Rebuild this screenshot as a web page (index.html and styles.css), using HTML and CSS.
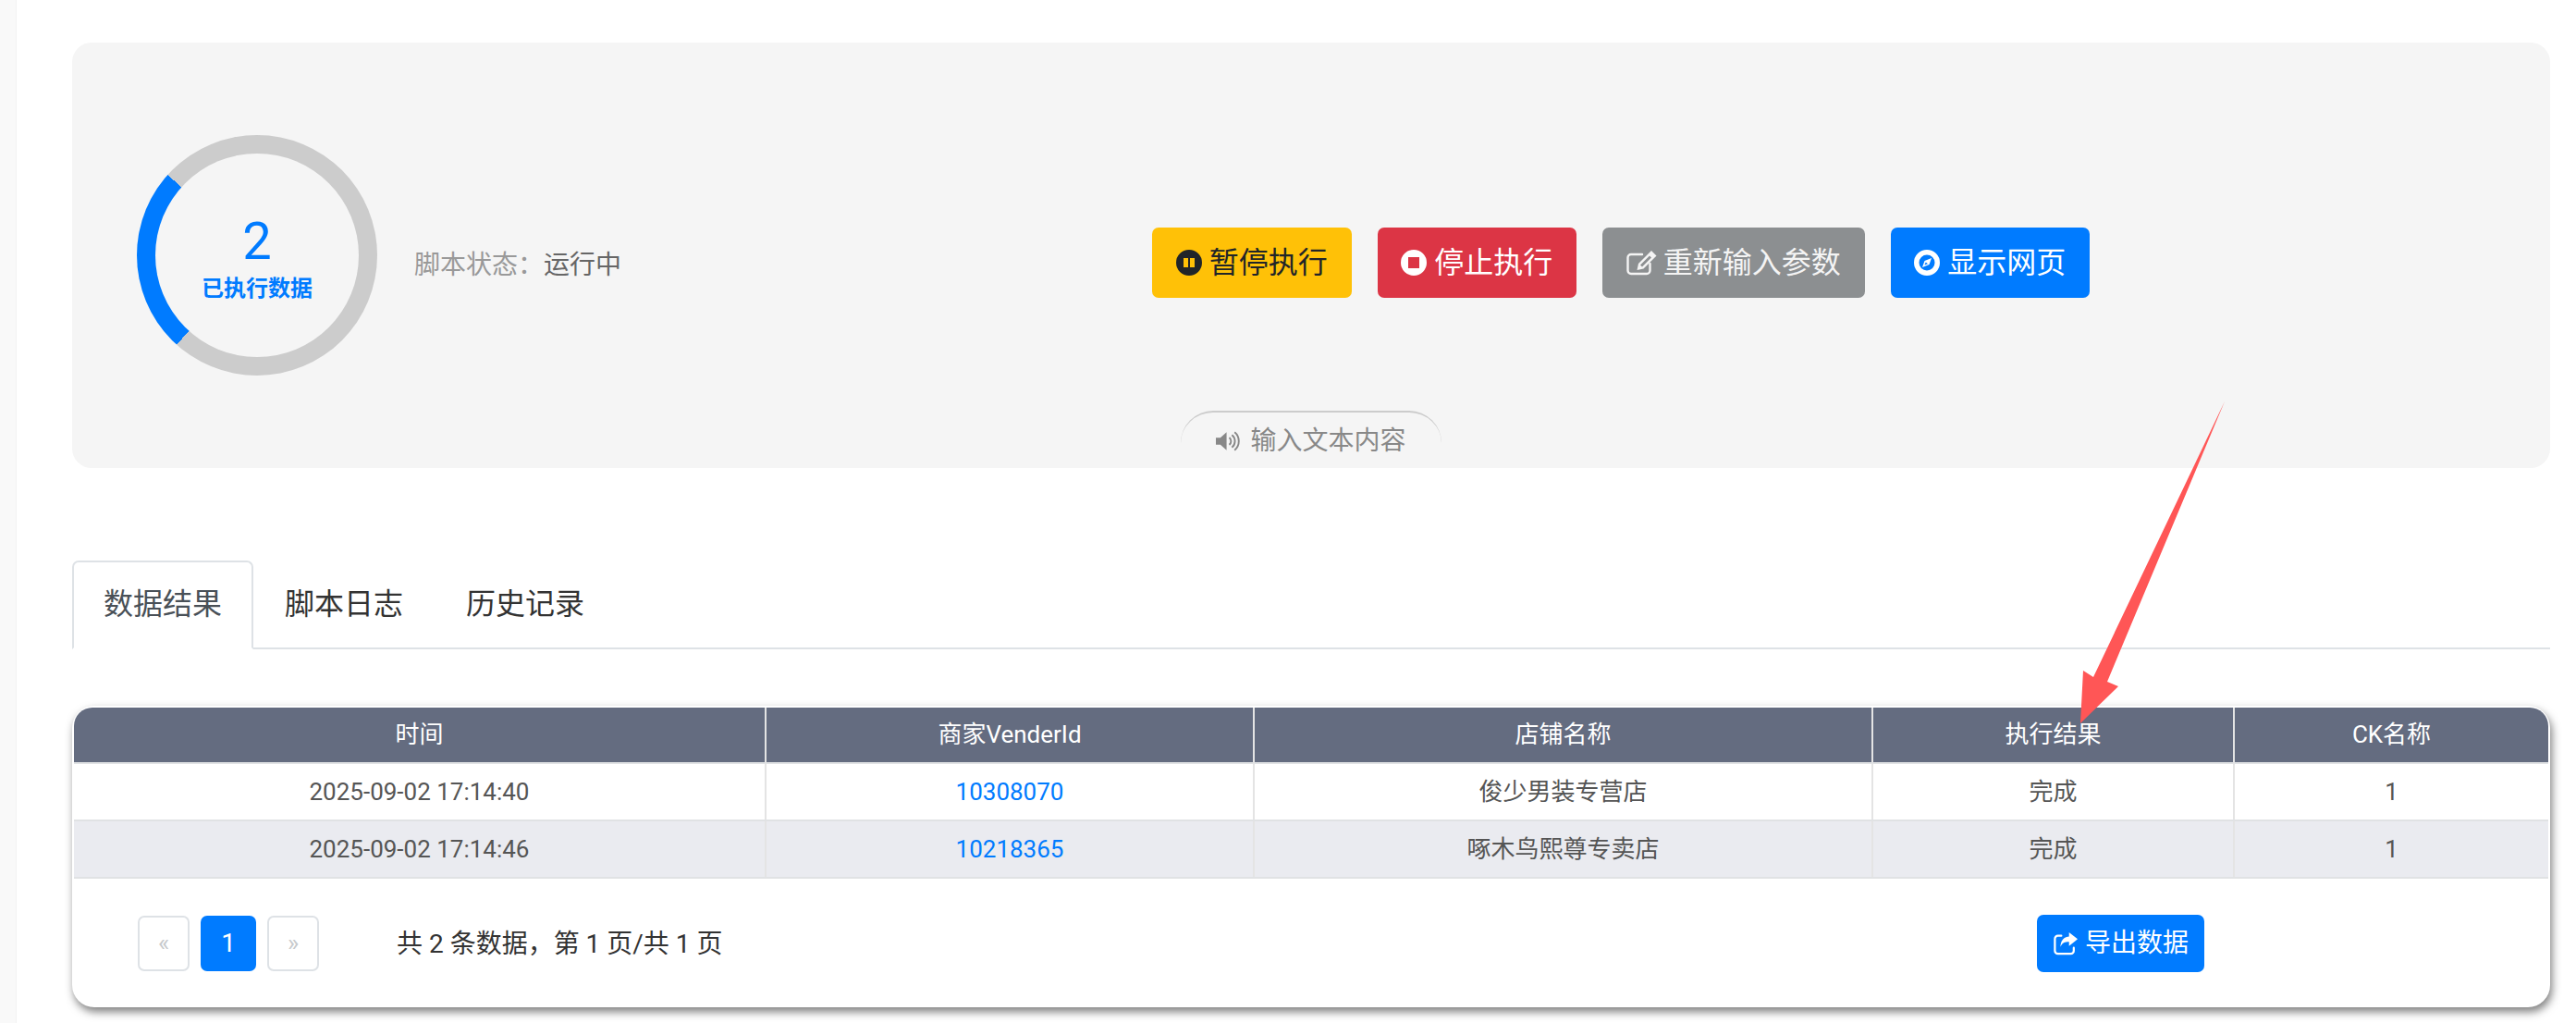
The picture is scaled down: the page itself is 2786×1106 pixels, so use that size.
FILE: index.html
```html
<!DOCTYPE html>
<html lang="zh-CN">
  <head>
    <meta charset="UTF-8" />
    <title>脚本执行</title>
    <link rel="stylesheet" href="styles.css">
  </head>
  <body>
    <div class="side-strip"></div>
    <div class="main">
      <!-- 状态面板 -->
      <section class="panel">
        <div class="ring">
          <div class="ring-inner">
            <span class="ring-num">2</span>
            <span class="ring-label">已执行数据</span>
          </div>
        </div>
        <div class="status"><span class="status-key">脚本状态&#xFF1A;</span>运行中</div>
        <div class="actions">
          <a class="btn btn-warning">
            <svg class="icon" viewBox="0 0 28 28"><path fill="currentColor" fill-rule="evenodd" d="M14 0a14 14 0 1 0 0 28a14 14 0 1 0 0-28zM8 9h5v10H8zM15 9h5v10h-5z"/></svg>暂停执行
          </a>
          <a class="btn btn-danger">
            <svg class="icon" viewBox="0 0 28 28"><path fill="currentColor" fill-rule="evenodd" d="M14 0a14 14 0 1 0 0 28a14 14 0 1 0 0-28zM8 8h12v12H8z"/></svg>停止执行
          </a>
          <a class="btn btn-secondary">
            <svg class="icon icon-wide" viewBox="0 0 33 28"><path fill="none" stroke="currentColor" stroke-width="2.4" stroke-linecap="round" d="M17 5H5a3.500 3.500 0 0 0-3.500 3.500v14A3.500 3.500 0 0 0 5 26h17a3.500 3.500 0 0 0 3.500-3.500V15"/><path fill="currentColor" d="M27 1l5.500 5.500l-14 14l-7 1.500l1.500-7zM25 6.500l-10 10l2 2l10-10z"/></svg>重新输入参数
          </a>
          <a class="btn btn-primary">
            <svg class="icon" viewBox="0 0 28 28"><path fill="currentColor" fill-rule="evenodd" d="M14 0a14 14 0 1 0 0 28a14 14 0 1 0 0-28zM14 5.500a8.500 8.500 0 1 1 0 17a8.500 8.500 0 1 1 0-17zM19 9l-7.500 3L9 19l7.500-3zM12.800 13.400L15 15.200L11.400 16.600z"/></svg>显示网页
          </a>
        </div>
        <div class="notice">
          <svg class="notice-icon" viewBox="0 0 28 24"><path fill="currentColor" d="M0 8h5l7-6v20l-7-6H0z"/><path fill="none" stroke="currentColor" stroke-width="2" d="M15 8a5 5 0 0 1 0 8M18 5a9 9 0 0 1 0 14M21 2a13 13 0 0 1 0 20"/></svg>输入文本内容
        </div>
      </section>

      <!-- 标签页 -->
      <ul class="tabs">
        <li class="tab active">数据结果</li>
        <li class="tab">脚本日志</li>
        <li class="tab">历史记录</li>
      </ul>

      <!-- 数据表格 -->
      <section class="card">
        <table class="data-table">
          <colgroup>
            <col class="col-time" />
            <col class="col-vender" />
            <col class="col-shop" />
            <col class="col-result" />
            <col />
          </colgroup>
          <thead>
            <tr>
              <th>时间</th>
              <th>商家VenderId</th>
              <th>店铺名称</th>
              <th>执行结果</th>
              <th>CK名称</th>
            </tr>
          </thead>
          <tbody>
            <tr>
              <td>2025-09-02 17:14:40</td>
              <td><a class="link">10308070</a></td>
              <td>俊少男装专营店</td>
              <td>完成</td>
              <td>1</td>
            </tr>
            <tr>
              <td>2025-09-02 17:14:46</td>
              <td><a class="link">10218365</a></td>
              <td>啄木鸟熙尊专卖店</td>
              <td>完成</td>
              <td>1</td>
            </tr>
          </tbody>
        </table>
        <div class="card-foot">
          <div class="pager">
            <a class="page-item disabled">«</a>
            <a class="page-item current">1</a>
            <a class="page-item disabled">»</a>
          </div>
          <span class="page-info">共 2 条数据&#xFF0C;第 1 页/共 1 页</span>
          <a class="btn btn-primary btn-export">
            <svg class="icon icon-export" viewBox="0 0 28 28"><path fill="none" stroke="currentColor" stroke-width="2.400" stroke-linecap="round" d="M9 5H5a3.500 3.500 0 0 0-3.500 3.500v14A3.500 3.500 0 0 0 5 26h15a3.500 3.500 0 0 0 3.500-3.500V19"/><path fill="currentColor" d="M18 1l10 8l-10 8v-5c-5 0-8 1-10 6c0-7 4-12 10-12z"/></svg>导出数据
          </a>
        </div>
      </section>
    </div>

    <!-- 标注箭头 -->
    <svg class="arrow" viewBox="0 0 2786 1106"><polygon fill="#ff5656" points="2406,434 2279,737 2291,742 2250,782 2253,725 2264,732"/></svg>
  </body>
</html>
```

FILE: styles.css
```css
* {
  margin: 0;
  padding: 0;
  box-sizing: border-box;
}
ul {
  list-style: none;
}
body {
  display: flex;
  height: 1106px;
  overflow: hidden;
  background-color: #fff;
  color: #333;
  font-family: Roboto, "Noto Sans CJK SC", sans-serif;
  font-size: 28px;
  line-height: 1.5;
}
.side-strip {
  width: 18px;
  background-color: #f9f9f9;
  border-right: 1px solid #f3f3f3;
}
.main {
  width: 2680px;
  margin: 46px 0 0 60px;
}

/* 状态面板 */
.panel {
  display: flex;
  align-items: center;
  position: relative;
  height: 460px;
  padding-left: 70px;
  background-color: #f5f5f5;
  border-radius: 21px;
}
.ring {
  flex: none;
  width: 260px;
  height: 260px;
  padding: 20px;
  border-radius: 50%;
  background: conic-gradient(#ccc 0 222deg, #007bff 222deg 312deg, #ccc 312deg);
}
.ring-inner {
  display: flex;
  flex-direction: column;
  align-items: center;
  justify-content: center;
  height: 100%;
  padding-top: 6px;
  border-radius: 50%;
  background-color: #f5f5f5;
  color: #007bff;
}
.ring-num {
  font-size: 56px;
  line-height: 66px;
}
.ring-label {
  font-size: 24px;
  font-weight: 700;
  line-height: 36px;
}
.status {
  flex: none;
  width: 224px;
  margin: 22px 0 0 40px;
  white-space: nowrap;
  color: #666;
}
.status-key {
  color: #999;
}
.actions {
  display: flex;
  gap: 28px;
  margin: 16px 0 0 574px;
}
.btn {
  display: flex;
  align-items: center;
  gap: 8px;
  height: 76px;
  padding: 0 25.75px;
  border-radius: 7px;
  font-size: 32px;
  color: #fff;
}
.icon {
  flex: none;
  width: 28px;
  height: 28px;
}
.icon-wide {
  width: 33px;
  margin-right: -1px;
}
.btn-warning {
  background-color: #ffc107;
  color: #212529;
}
.btn-danger {
  background-color: #dc3545;
}
.btn-secondary {
  background-color: #8c8f91;
  color: #f4f4f4;
}
.btn-primary {
  background-color: #007bff;
}
.notice {
  display: flex;
  align-items: center;
  justify-content: center;
  gap: 10px;
  position: absolute;
  left: 1199px;
  bottom: 0;
  width: 282px;
  height: 62px;
  padding-top: 2px;
  border-top: 2px solid #ccc;
  border-radius: 35px 35px 0 0;
  color: #888;
}
.notice-icon {
  width: 27px;
  height: 24px;
}

/* 标签页 */
.tabs {
  display: flex;
  height: 96px;
  margin-top: 100px;
  border-bottom: 2px solid #dee2e6;
}
.tab {
  height: 96px;
  padding: 0 32px;
  border: 2px solid transparent;
  border-radius: 7px 7px 0 0;
  font-size: 32px;
  line-height: 91px;
}
.tab.active {
  background-color: #fff;
  border-color: #dee2e6 #dee2e6 #fff;
  color: #495057;
}

/* 数据表格 */
.card {
  margin-top: 61px;
  padding-top: 2px;
  border-radius: 24px;
  background-color: #fff;
  box-shadow: 2px 5px 10px rgba(0, 0, 0, 0.5);
}
.data-table {
  width: 2676px;
  margin: 0 2px;
  table-layout: fixed;
  border-collapse: collapse;
  text-align: center;
  font-size: 26px;
}
.col-time {
  width: 748px;
}
.col-vender {
  width: 528px;
}
.col-shop {
  width: 669px;
}
.col-result {
  width: 391px;
}
.data-table th {
  height: 60px;
  background-color: #646c80;
  border-right: 2px solid #e4e4e4;
  border-bottom: 2px solid #e0e2e4;
  color: #fff;
  font-weight: 400;
}
.data-table th:first-child {
  border-top-left-radius: 20px;
}
.data-table th:last-child {
  border-top-right-radius: 20px;
  border-right: 0;
}
.data-table td {
  height: 62px;
  border-right: 2px solid #e4e4e4;
  border-bottom: 2px solid #e0e2e4;
  color: #555;
}
.data-table td:last-child {
  border-right: 0;
}
.data-table tbody tr:nth-child(even) {
  background-color: #eaebf0;
}
.link {
  color: #007bff;
}
.card-foot {
  display: flex;
  align-items: center;
  height: 139px;
  padding: 0 374px 0 71px;
}
.pager {
  display: flex;
  gap: 12px;
}
.page-item {
  display: flex;
  align-items: center;
  justify-content: center;
  width: 56px;
  height: 60px;
  border-radius: 7px;
}
.page-item.disabled {
  border: 2px solid #dee2e6;
  color: #c6c9cc;
  font-size: 26px;
}
.page-item.current {
  width: 60px;
  background-color: #007bff;
  color: #fff;
}
.page-info {
  margin: 2px 0 0 84px;
}
.btn-export {
  height: 62px;
  margin-left: auto;
  padding: 0 17px 0 18px;
  font-size: 28px;
}
.icon-export {
  width: 26px;
  height: 26px;
}

/* 标注箭头 */
.arrow {
  position: absolute;
  top: 0;
  left: 0;
  width: 2786px;
  height: 1106px;
  pointer-events: none;
}
```
